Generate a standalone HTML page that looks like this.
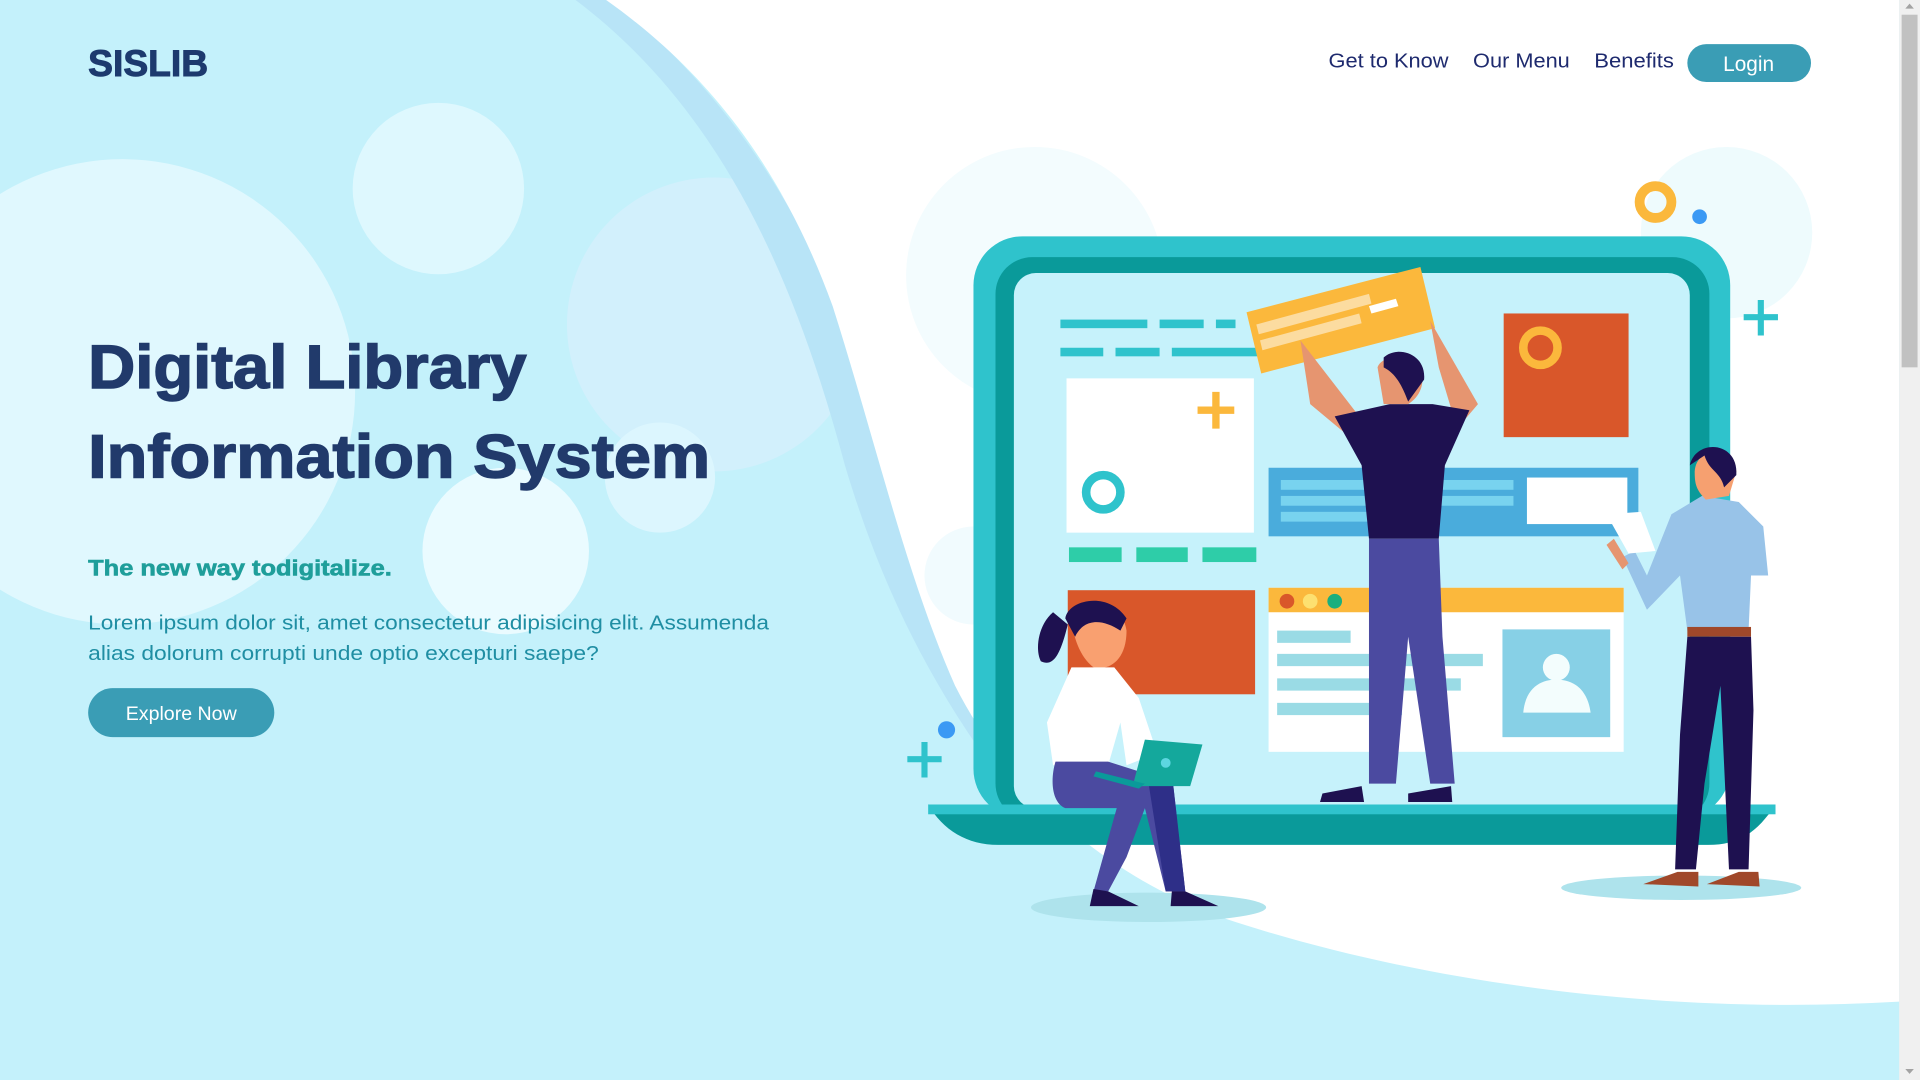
<!DOCTYPE html>
<html><head><meta charset="utf-8"><style>
html,body{margin:0;padding:0;width:1920px;height:1080px;overflow:hidden;background:#c4f1fb}
svg{display:block}
text{font-family:"Liberation Sans",sans-serif}
</style></head><body>
<svg width="1920" height="1080" viewBox="0 0 1568 882" xmlns="http://www.w3.org/2000/svg">
<rect width="1568" height="882" fill="#c4f1fb"/>
<circle cx="100" cy="320" r="190" fill="#e0f8fe"/>
<circle cx="358" cy="154" r="70" fill="#def8fe"/>
<circle cx="583" cy="265" r="120" fill="#d2f0fc"/>
<circle cx="413" cy="450" r="68" fill="#eafbff"/>
<circle cx="539" cy="390" r="45" fill="#dcf6fe"/>
<path d="M470 0 L500 0 C600 80 680 200 720 360 C750 480 790 560 850 620 L820 640 C760 560 720 480 690 380 C650 230 590 90 470 0 Z" fill="#b8e4f7"/>
<path d="M495 0 L1551 0 L1551 818 C1350 830 1150 800 1000 750 C900 715 820 640 780 560 C740 470 715 360 680 250 C640 140 580 60 495 0 Z" fill="#ffffff"/>
<circle cx="795" cy="470" r="40" fill="#f1fbfe"/>
<circle cx="845" cy="225" r="105" fill="#f3fcfe"/>
<circle cx="1410" cy="190" r="70" fill="#eefbfd"/>
<circle cx="1352" cy="165" r="13" fill="none" stroke="#fbb83c" stroke-width="8"/>
<circle cx="1388" cy="177" r="6" fill="#3b99f4"/>
<path d="M1438 245 V274 M1424 259 H1452" stroke="#2fc3cc" stroke-width="5"/>
<path d="M755 606 V635 M741 620 H769" stroke="#2fc3cc" stroke-width="5"/>
<circle cx="773" cy="596" r="7" fill="#3b99f4"/>
<rect x="795" y="193" width="618" height="475" rx="40" fill="#2fc3cc"/>
<rect x="813" y="210" width="583" height="460" rx="30" fill="#0a9a9a"/>
<rect x="828" y="223" width="552" height="437" rx="18" fill="#c6f2fb"/>
<path d="M758 657 H1450 C1435 680 1420 690 1395 690 H815 C790 690 770 678 758 657 Z" fill="#0a9a9a"/>
<rect x="758" y="657" width="692" height="8" fill="#2fc3cc"/>
<g fill="#2fc3cc">
<rect x="866" y="261" width="71" height="7"/><rect x="947" y="261" width="36" height="7"/><rect x="993" y="261" width="16" height="7"/>
<rect x="866" y="284" width="35" height="7"/><rect x="911" y="284" width="36" height="7"/><rect x="957" y="284" width="70" height="7"/>
</g>
<rect x="871" y="309" width="153" height="126" fill="#fff"/>
<path d="M993 320 V350 M978 335 H1008" stroke="#fbb83c" stroke-width="6"/>
<circle cx="901" cy="402" r="14" fill="none" stroke="#2fc3cc" stroke-width="7"/>
<g fill="#2ecda8"><rect x="873" y="447" width="43" height="12"/><rect x="928" y="447" width="42" height="12"/><rect x="982" y="447" width="44" height="12"/></g>
<rect x="1228" y="256" width="102" height="101" fill="#d9572a"/>
<circle cx="1258" cy="284" r="14" fill="none" stroke="#fbb83c" stroke-width="7"/>
<rect x="1036" y="382" width="302" height="56" fill="#4aacdc"/>
<g fill="#78d3ef"><rect x="1046" y="392" width="190" height="8"/><rect x="1046" y="405" width="190" height="8"/><rect x="1046" y="418" width="100" height="8"/></g>
<rect x="1247" y="390" width="82" height="38" fill="#fff"/>
<polygon points="1018,255 1160,218 1172,268 1030,305" fill="#fbb83c"/>
<polygon points="1026,265 1118,240 1120,248 1028,273" fill="#fcdca0"/>
<polygon points="1029,278 1110,256 1112,264 1031,286" fill="#fcdca0"/>
<polygon points="1118,250 1140,244 1142,250 1120,256" fill="#fff"/>
<rect x="872" y="482" width="153" height="85" fill="#d9572a"/>
<rect x="1036" y="480" width="290" height="134" fill="#fff"/>
<rect x="1036" y="480" width="290" height="20" fill="#fbb83c"/>
<circle cx="1051" cy="491" r="6" fill="#d9572a"/><circle cx="1070" cy="491" r="6" fill="#fde070"/><circle cx="1090" cy="491" r="6" fill="#1aaf7e"/>
<g fill="#9adbe5"><rect x="1043" y="515" width="60" height="10"/><rect x="1043" y="534" width="168" height="10"/><rect x="1043" y="554" width="150" height="10"/><rect x="1043" y="574" width="102" height="10"/></g>
<rect x="1227" y="514" width="88" height="88" fill="#87d0e6"/>
<circle cx="1271" cy="545" r="11" fill="#f3fdfd"/>
<path d="M1244 582 C1246 560 1260 555 1271 555 C1282 555 1296 560 1299 582 Z" fill="#f3fdfd"/>
<ellipse cx="938" cy="741" rx="96" ry="12" fill="#aee3ec"/>
<ellipse cx="1373" cy="725" rx="98" ry="10" fill="#aee3ec"/>
<path d="M1062 278 L1070 330 L1100 355 L1110 340 Z" fill="#e69570"/>
<path d="M1168 262 L1207 330 L1190 350 L1175 300 Z" fill="#e69570"/>
<path d="M1090 340 L1135 330 L1170 330 L1200 335 L1180 380 L1175 440 L1118 440 L1112 380 Z" fill="#1e1150"/>
<path d="M1118 440 L1175 440 L1178 520 L1188 640 L1168 640 L1150 520 L1140 640 L1118 640 Z" fill="#4b4aa0"/>
<path d="M1125 300 C1128 290 1150 288 1160 300 C1165 315 1158 325 1150 330 L1130 330 Z" fill="#e69570"/>
<path d="M1130 292 C1140 282 1165 288 1163 310 L1150 328 C1145 315 1140 305 1130 300 Z" fill="#1e1150"/>
<path d="M1080 648 L1112 642 L1114 655 L1078 655 Z M1150 648 L1185 642 L1186 655 L1150 655 Z" fill="#1e1150"/>
<path d="M1390 405 L1420 410 L1440 430 L1444 470 L1430 470 L1428 515 L1378 515 L1372 470 L1345 498 L1325 455 L1335 450 L1345 470 L1365 420 Z" fill="#98c3e8"/>
<path d="M1318 440 L1330 460 L1325 465 L1312 445 Z" fill="#e69570"/>
<path d="M1312 420 L1340 418 L1352 450 L1330 452 Z" fill="#fff"/>
<rect x="1378" y="512" width="52" height="8" fill="#a0482a"/>
<path d="M1378 520 L1430 520 L1432 580 L1428 710 L1412 710 L1405 560 L1392 640 L1385 710 L1368 710 L1372 600 Z" fill="#1e1150"/>
<path d="M1342 722 L1370 712 L1387 712 L1387 724 Z M1394 722 L1420 712 L1436 712 L1437 724 Z" fill="#a0482a"/>
<path d="M1384 385 C1385 365 1415 360 1418 385 L1412 405 L1393 408 C1385 400 1384 395 1384 385 Z" fill="#f6a070"/>
<path d="M1380 380 C1385 358 1420 360 1418 388 L1408 398 C1405 385 1396 385 1392 372 Z" fill="#1e1150"/>
<path d="M860 500 C848 510 845 530 850 540 C860 545 866 535 872 510 Z" fill="#1e1150"/>
<path d="M875 500 C880 490 915 485 920 515 C920 540 905 548 893 545 C880 535 875 515 875 500 Z" fill="#f9a070"/>
<path d="M870 505 C872 490 905 482 920 505 L915 515 C900 505 885 505 878 520 Z" fill="#1e1150"/>
<path d="M875 545 L910 545 L930 570 L945 615 L920 625 L915 590 L905 625 L860 625 L855 590 Z" fill="#fff"/>
<path d="M862 622 L905 622 L930 630 L958 640 L968 728 L952 728 L935 660 L920 700 L905 728 L893 728 L912 660 L870 660 C858 655 858 635 862 622 Z" fill="#4b4aa0"/>
<path d="M938 640 L958 640 L968 728 L952 728 Z" fill="#2e2f88"/>
<path d="M890 740 L893 726 L905 728 L930 740 Z M956 740 L957 728 L968 728 L995 740 Z" fill="#1e1150"/>
<path d="M935 604 L982 608 L972 642 L925 642 Z" fill="#14a89c"/>
<path d="M895 630 L935 640 L930 644 L893 634 Z" fill="#0a9a9a"/>
<circle cx="952" cy="623" r="4" fill="#5dd6e0"/>
<text x="72" y="62" font-size="30" font-weight="bold" fill="#1d3a6e" stroke="#1d3a6e" stroke-width="0.8" textLength="98" lengthAdjust="spacingAndGlyphs">SISLIB</text>
<g font-size="16.5" fill="#1e2a6e">
<text x="1085" y="55" textLength="98" lengthAdjust="spacingAndGlyphs">Get to Know</text>
<text x="1203" y="55" textLength="79" lengthAdjust="spacingAndGlyphs">Our Menu</text>
<text x="1302" y="55" textLength="65" lengthAdjust="spacingAndGlyphs">Benefits</text>
</g>
<rect x="1378" y="36" width="101" height="31" rx="15.5" fill="#3a9db5"/>
<text x="1428" y="58" font-size="17" fill="#fff" text-anchor="middle">Login</text>
<g font-size="50" font-weight="bold" fill="#213a6b" stroke="#213a6b" stroke-width="1.2">
<text x="72" y="317" textLength="358" lengthAdjust="spacingAndGlyphs">Digital Library</text>
<text x="72" y="390" textLength="508" lengthAdjust="spacingAndGlyphs">Information System</text>
</g>
<text x="72" y="470" font-size="18" font-weight="bold" fill="#1f9e9a" stroke="#1f9e9a" stroke-width="0.5" textLength="248" lengthAdjust="spacingAndGlyphs">The new way todigitalize.</text>
<g font-size="16.5" fill="#1f8ea3">
<text x="72" y="514" textLength="556" lengthAdjust="spacingAndGlyphs">Lorem ipsum dolor sit, amet consectetur adipisicing elit. Assumenda</text>
<text x="72" y="539" textLength="417" lengthAdjust="spacingAndGlyphs">alias dolorum corrupti unde optio excepturi saepe?</text>
</g>
<rect x="72" y="562" width="152" height="40" rx="20" fill="#3a9db5"/>
<text x="148" y="588" font-size="16" fill="#fff" text-anchor="middle">Explore Now</text>
<rect x="1551" y="0" width="17" height="882" fill="#f0f0f0"/>
<rect x="1553" y="12" width="13" height="288" fill="#c1c1c1"/>
<path d="M1556 7 L1559.5 3 L1563 7 Z M1556 873 L1559.5 877 L1563 873 Z" fill="#a3a3a3"/>
</svg>
</body></html>
